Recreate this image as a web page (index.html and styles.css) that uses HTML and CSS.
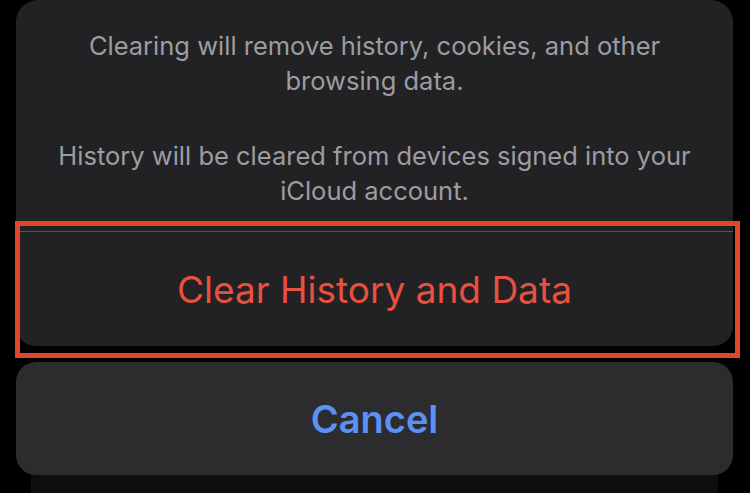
FILE: index.html
```html
<!DOCTYPE html>
<html lang="en">
  <head>
    <meta charset="UTF-8" />
    <meta name="viewport" content="width=device-width, initial-scale=1.0" />
    <title>Clear History</title>
    <link rel="stylesheet" href="styles.css">
  </head>
  <body>
    <div class="sheet">
      <div class="alert">
        <div class="message">
          <p>Clearing will remove history, cookies, and other browsing data.</p>
          <p>History will be cleared from devices signed into your iCloud account.</p>
        </div>
        <button class="action destructive">Clear History and Data</button>
      </div>

      <button class="cancel">Cancel</button>

      <div class="backdrop"></div>

      <div class="highlight"></div>
    </div>
  </body>
</html>
```

FILE: styles.css
```css
body {
  margin: 0;
  background-color: #000;
  font-family: "Inter", "Liberation Sans", sans-serif;
  width: 750px;
  height: 493px;
  overflow: hidden;
}
.sheet {
  position: relative;
  display: flex;
  flex-direction: column;
  gap: 16px;
  padding: 0 17px 0 16px;
}
.alert {
  background-color: #222224;
  border-radius: 22px 22px 20px 20px;
  display: flex;
  flex-direction: column;
}
.message {
  height: 232px;
  box-sizing: border-box;
  padding: 28px 30px 0;
  border-bottom: 1px solid #56565a;
  color: #9c9ca1;
  text-align: center;
  font-size: 25.5px;
  line-height: 35px;
}
.message p {
  margin: 0 0 40px;
}
button {
  font-family: inherit;
  border: none;
  cursor: pointer;
  background: none;
}
.action {
  height: 114px;
  font-size: 37px;
  color: #e8513f;
}
.cancel {
  height: 113px;
  background-color: #2c2c2e;
  border-radius: 20px;
  font-size: 38px;
  font-weight: 600;
  color: #5b91f5;
}
.backdrop {
  margin: -16px 15px 0;
  height: 20px;
  background-color: #0e0e10;
}
.highlight {
  position: absolute;
  left: 15px;
  top: 221px;
  width: 715px;
  height: 127px;
  border: 5px solid #e6432c;
}
```
